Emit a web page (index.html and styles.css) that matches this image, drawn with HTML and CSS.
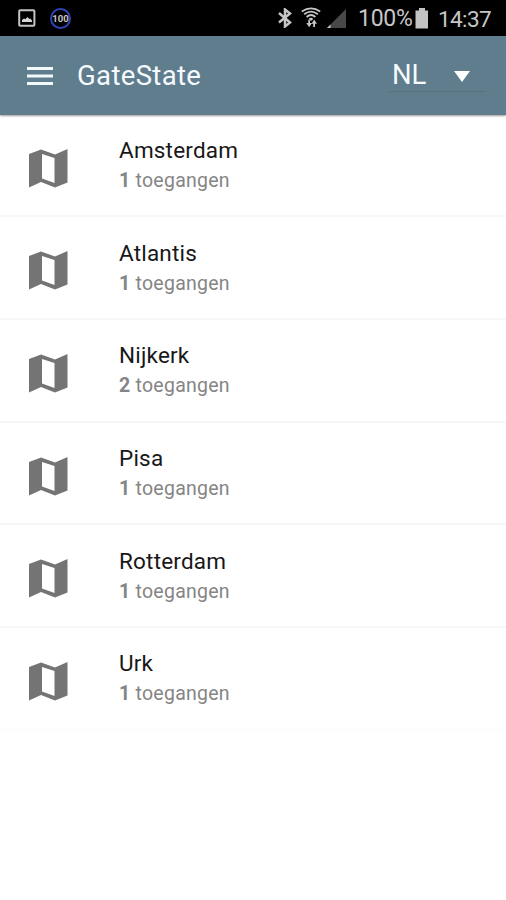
FILE: index.html
```html
<!DOCTYPE html>
<html lang="nl">
<head>
<meta charset="utf-8">
<title>GateState</title>
<link rel="stylesheet" href="styles.css">
</head>
<body>
<svg class="defs" width="0" height="0" aria-hidden="true">
  <symbol id="map" viewBox="0 0 39 39"><path fill-rule="evenodd" d="M0 5 12 .5 26 5.5 38.500 0V33.500L26 38.500 12 33 0 38.500ZM13 5V29.500L25.500 34V9Z"/></symbol>
</svg>
<div class="status">
  <svg class="picture" width="18" height="18" viewBox="0 0 18 18"><rect x="1.200" y="1.200" width="15.200" height="15.600" rx="1" fill="none" stroke="#c4c4c4" stroke-width="2"/><path d="M4 13V11l2-1.500 1.300.8L9.500 8l1.700 2 1-.6 1.800 2V13Z" fill="#d6d6d6"/></svg>
  <div class="badge">100</div>
  <div class="spacer"></div>
  <svg class="bluetooth" width="14" height="20" viewBox="0 0 14 20"><path d="M1 5 12 14.500 7 18.500V1.500L12 5.500 1 14.500" fill="none" stroke="#c6c6c6" stroke-width="2.500"/></svg>
  <svg class="wifi" width="20" height="21" viewBox="0 0 20 21"><g fill="none" stroke="#c6c6c6" stroke-width="1.800"><path d="M.8 4.500Q10-1.800 19.200 4.500M3.200 7.300Q10 2 16.800 7.300M5.600 10Q10 6 14.400 10"/></g><path d="M7.800 11.800Q10 9.800 12.200 11.800L11 13.500H9ZM7.300 12.500V16H5.300L8.200 20.200 11 16H9V12.500ZM12.200 20V16.800H10.500L13.200 12.500 16 16.800H14V20Z" fill="#c6c6c6"/></svg>
  <svg class="signal" width="19" height="19" viewBox="0 0 19 19"><path d="M19 0V19H0Z" fill="#484848"/><path d="M3.500 15.500V19H0Z" fill="#c6c6c6"/></svg>
  <span class="percent">100%</span>
  <svg class="battery" width="14" height="21" viewBox="0 0 14 21"><path d="M4 0H10V2.500H13V20.500H.500V2.500H4Z" fill="#c4c4c4"/></svg>
  <span class="clock">14:37</span>
</div>
<header class="bar">
  <svg class="menu" width="26" height="18" viewBox="0 0 26 18"><path d="M0 1.500H26M0 9H26M0 16.500H26" stroke="#f3f8fb" stroke-width="3"/></svg>
  <h1 class="title">GateState</h1>
  <div class="select"><span class="lang">NL</span><svg class="arrow" width="16" height="11" viewBox="0 0 16 11"><path d="M0 0H16L8 11Z" fill="#fff"/></svg></div>
</header>
<main class="list">
  <div class="row"><svg class="map"><use href="#map"/></svg><div><div class="name">Amsterdam</div><div class="sub"><b>1</b> toegangen</div></div></div>
  <div class="row"><svg class="map"><use href="#map"/></svg><div><div class="name">Atlantis</div><div class="sub"><b>1</b> toegangen</div></div></div>
  <div class="row"><svg class="map"><use href="#map"/></svg><div><div class="name">Nijkerk</div><div class="sub"><b>2</b> toegangen</div></div></div>
  <div class="row"><svg class="map"><use href="#map"/></svg><div><div class="name">Pisa</div><div class="sub"><b>1</b> toegangen</div></div></div>
  <div class="row"><svg class="map"><use href="#map"/></svg><div><div class="name">Rotterdam</div><div class="sub"><b>1</b> toegangen</div></div></div>
  <div class="row"><svg class="map"><use href="#map"/></svg><div><div class="name">Urk</div><div class="sub"><b>1</b> toegangen</div></div></div>
</main>
</body>
</html>
```
FILE: styles.css
```css
* { box-sizing: border-box; }
body { margin: 0; background: #fff; font-family: Roboto, "Liberation Sans", sans-serif; height: 900px; overflow: hidden; }
svg { display: block; flex: none; }
.defs { position: absolute; }
.status { height: 36px; background: #000; color: #c6c6c6; display: flex; align-items: flex-start; padding: 0 15px 0 18px; font-size: 23px; line-height: 36px; }
.status span { white-space: nowrap; padding-top: 1px; }
.picture { margin-top: 9px; }
.badge { width: 21px; height: 21px; margin: 8px 0 0 14px; border: 2px solid #2e42b5; border-radius: 50%; font-size: 9.500px; font-weight: 700; line-height: 17px; display: flex; justify-content: center; }
.spacer { flex: 1; }
.bluetooth { margin: 8px 9px 0 0; }
.wifi { margin: 7px 6px 0 0; }
.signal { margin: 9px 12px 0 0; }
.percent { width: 53px; letter-spacing: -.3px; }
.battery { margin: 8px 9px 0 4px; }
.clock { width: 53px; font-size: 22.500px; letter-spacing: -.6px; }
.bar { height: 79px; background: #607d8d; box-shadow: 0 1px 2px rgba(0,0,0,.4); display: flex; align-items: flex-start; padding: 0 21px 0 27px; color: #f5faff; position: relative; }
.menu { margin-top: 31px; }
.title { margin: 23px 0 0 24px; font-size: 27.500px; font-weight: 400; line-height: 34px; letter-spacing: .35px; }
.select { margin: 21px 0 0 auto; width: 97px; height: 35px; border-bottom: 1px solid #547480; display: flex; padding: 0 15px 0 4px; justify-content: space-between; }
.lang { font-size: 27.500px; line-height: 35px; }
.arrow { margin-top: 14px; }
.list { margin-top: -.5px; }
.row { height: 102.700px; border-bottom: 2px solid #f7f7f7; display: flex; padding: 21.500px 0 0 29px; }
.row:last-child { border-color: #fdfdfd; }
.map { width: 39px; height: 39px; margin: 12.500px 51px 0 0; fill: #747474; }
.name { font-size: 22.500px; line-height: 29px; letter-spacing: .2px; color: #181818; }
.sub { font-size: 19.500px; line-height: 31px; letter-spacing: .25px; color: #858585; }
```
